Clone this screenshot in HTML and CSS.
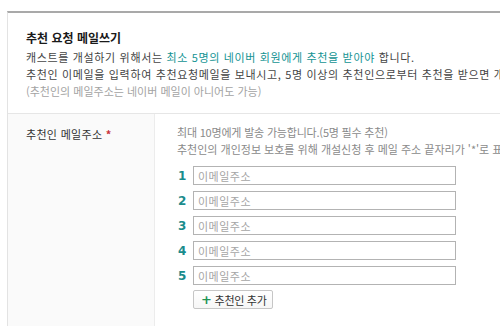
FILE: index.html
```html
<!DOCTYPE html>
<html lang="ko">
	<head>
		<meta charset="UTF-8" />
		<meta name="viewport" content="width=device-width, initial-scale=1.0" />
		<title>추천 요청 메일쓰기</title>
		<link rel="stylesheet" href="styles.css">
	</head>
	<body>
		<div class="wrap">
			<!-- 안내 -->
			<div class="head">
				<h2>추천 요청 메일쓰기</h2>
				<p>캐스트를 개설하기 위해서는 <span class="em">최소 5명의 네이버 회원에게 추천을 받아야</span> 합니다.</p>
				<p>추천인 이메일을 입력하여 추천요청메일을 보내시고, 5명 이상의 추천인으로부터 추천을 받으면 개설이 가능합니다.</p>
				<p class="sub">(추천인의 메일주소는 네이버 메일이 아니어도 가능)</p>
			</div>

			<!-- 추천인 메일주소 -->
			<div class="row">
				<div class="label">추천인 메일주소 <span class="req">*</span></div>
				<div class="field">
					<p class="note short">최대 10명에게 발송 가능합니다.(5명 필수 추천)</p>
					<p class="note">추천인의 개인정보 보호를 위해 개설신청 후 메일 주소 끝자리가 '*'로 표시됩니다.</p>
					<ol class="mails">
						<li><span class="num">1</span><input type="text" placeholder="이메일주소" /></li>
						<li><span class="num">2</span><input type="text" placeholder="이메일주소" /></li>
						<li><span class="num">3</span><input type="text" placeholder="이메일주소" /></li>
						<li><span class="num">4</span><input type="text" placeholder="이메일주소" /></li>
						<li><span class="num">5</span><input type="text" placeholder="이메일주소" /></li>
					</ol>
					<button type="button" class="add"><span class="plus">+</span>추천인 추가</button>
				</div>
			</div>
		</div>
	</body>
</html>
```

FILE: styles.css
```css
body {
	margin: 0;
	overflow: hidden;
	font-family: "Noto Sans CJK KR", "Liberation Sans", sans-serif;
	font-size: 11px;
	color: #444;
	background: #fff;
}
.wrap {
	margin: 11px 0 0 7px;
	width: 640px;
	height: 400px;
	border-top: 2px solid #a9a9a9;
	border-left: 1px solid #e3e3e3;
}
.head {
	padding: 16px 18px 13px;
}
.head h2 {
	margin: 0 0 3px;
	font-size: 12px;
	line-height: 17px;
	font-weight: bold;
	color: #1a1a1a;
}
.head p {
	margin: 0;
	line-height: 17px;
	letter-spacing: 0.65px;
	white-space: nowrap;
}
.head .em {
	color: #139393;
}
.head .sub {
	color: #a3a3a3;
	letter-spacing: 0;
}
.row {
	display: flex;
	border-top: 1px solid #e6e6e6;
	height: 300px;
}
.label {
	width: 128px;
	padding: 12px 0 0 18px;
	background: #fafafa;
	border-right: 1px solid #ececec;
	line-height: 17px;
	letter-spacing: 0.3px;
	color: #333;
}
.req {
	color: #c8343c;
	font-weight: bold;
}
.field {
	padding: 10px 0 0 22px;
}
.note {
	margin: 0;
	line-height: 17px;
	color: #8a8a8a;
	white-space: nowrap;
}
.note.short {
	letter-spacing: -0.2px;
}
.mails {
	list-style: none;
	margin: 8px 0 0;
	padding: 0;
	display: flex;
	flex-direction: column;
	gap: 6px;
}
.mails li {
	display: flex;
	align-items: center;
}
.num {
	width: 16px;
	padding-left: 1px;
	font-family: "DejaVu Sans", sans-serif;
	font-size: 12px;
	font-weight: bold;
	color: #1a8c8c;
}
.mails input {
	box-sizing: border-box;
	width: 263px;
	height: 19px;
	margin: 0 0 0 -1px;
	padding: 0 4px;
	border: 1px solid #b3b3b3;
	font-family: inherit;
	font-size: 11px;
	color: #333;
}
.mails input::placeholder {
	color: #a5a5a5;
	letter-spacing: 0.5px;
}
.add {
	box-sizing: border-box;
	display: flex;
	align-items: center;
	height: 19px;
	margin: 5px 0 0 16px;
	padding: 0 6px 0 7px;
	border: 1px solid #c6c6c6;
	border-radius: 2px;
	background: linear-gradient(#fff, #f6f6f6);
	font-family: inherit;
	font-size: 11px;
	letter-spacing: -0.3px;
	color: #333;
	cursor: pointer;
}
.plus {
	margin-right: 3px;
	font-family: "DejaVu Sans", sans-serif;
	font-size: 13px;
	font-weight: bold;
	color: #1e9455;
}
```
